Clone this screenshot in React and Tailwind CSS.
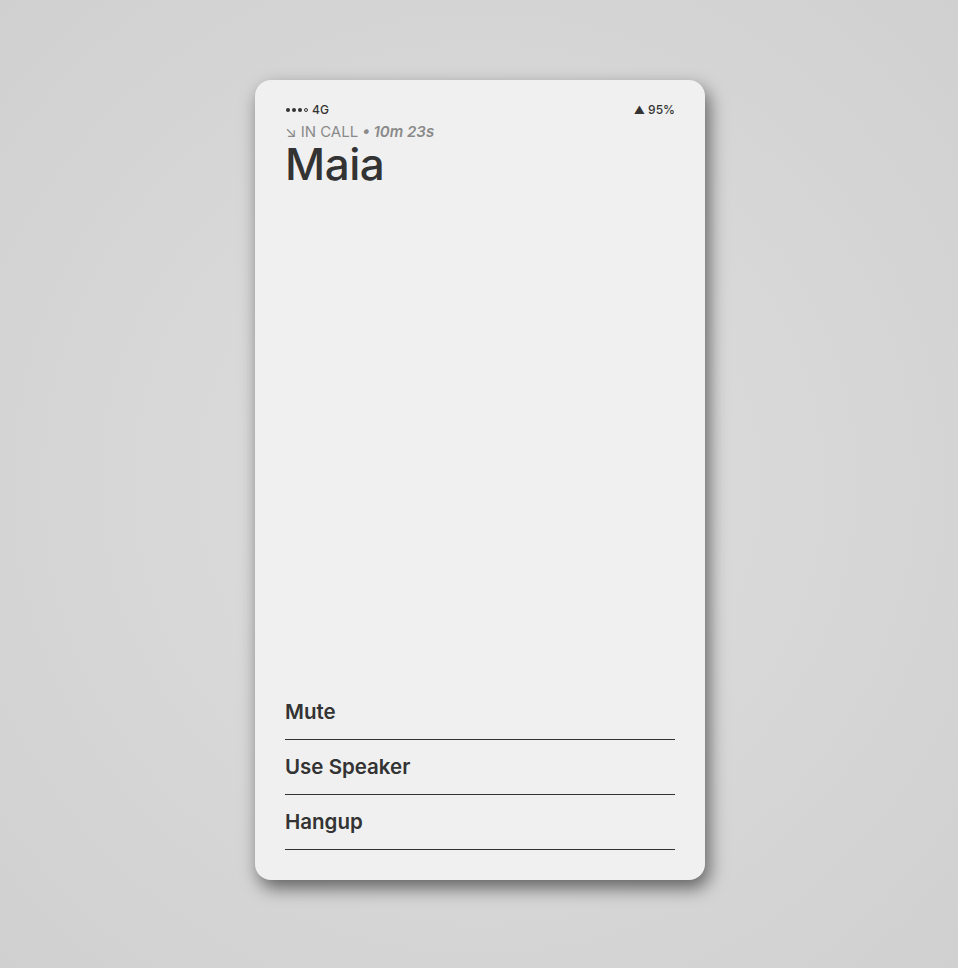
import React from 'react';

const actions = ['Mute', 'Use Speaker', 'Hangup'];

const SignalDots = () => (
    <span className="flex items-center gap-[2px] mr-[4px]">
        <span className="w-[4px] h-[4px] rounded-full bg-[#333]" />
        <span className="w-[4px] h-[4px] rounded-full bg-[#333]" />
        <span className="w-[4px] h-[4px] rounded-full bg-[#333]" />
        <span className="w-[4px] h-[4px] rounded-full border border-[#333]" />
    </span>
);

const App = () => {
    return (
        <div
            className="
                w-full min-h-screen
                flex justify-center
                pt-[80px] pl-[2px]
                bg-[radial-gradient(ellipse_at_center,#dedede_0%,#d6d6d6_60%,#d0d0d0_100%)]
            "
            style={{ fontFamily: 'Inter, "Noto Sans", sans-serif' }}
        >
            <div className="
                w-[450px] h-[800px]
                flex flex-col
                rounded-[16px]
                bg-[#f0f0f0]
                shadow-[4px_8px_18px_rgba(0,0,0,0.55)]
                px-[30px] pt-[22px] pb-[30px]
            ">
                <div className="flex items-center justify-between text-[12px] leading-[16px] font-medium text-[#333]">
                    <div className="flex items-center pl-[1px]">
                        <SignalDots />
                        <span>4G</span>
                    </div>
                    <div className="flex items-center gap-[3px]">
                        <span className="text-[11px]">▲</span>
                        <span>95%</span>
                    </div>
                </div>

                <div className="mt-[5px] text-[15px] leading-[18px] text-[#8a8a8a] flex items-center">
                    <span className="mr-[4px]">↘</span>
                    <span>IN CALL</span>
                    <span className="ml-[4px] font-semibold italic">• 10m 23s</span>
                </div>

                <h1 className="text-[44px] leading-[44px] font-medium text-[#333] mt-[1px] tracking-[-0.5px]">
                    Maia
                </h1>

                <div className="flex-1" />

                <div className="flex flex-col">
                    {actions.map(label => (
                        <div
                            key={label}
                            className="
                                h-[55px]
                                flex items-center
                                border-b border-[#333]
                                text-[20.5px] font-semibold text-[#333]
                            "
                        >
                            {label}
                        </div>
                    ))}
                </div>
            </div>
        </div>
    );
};

export default App;
